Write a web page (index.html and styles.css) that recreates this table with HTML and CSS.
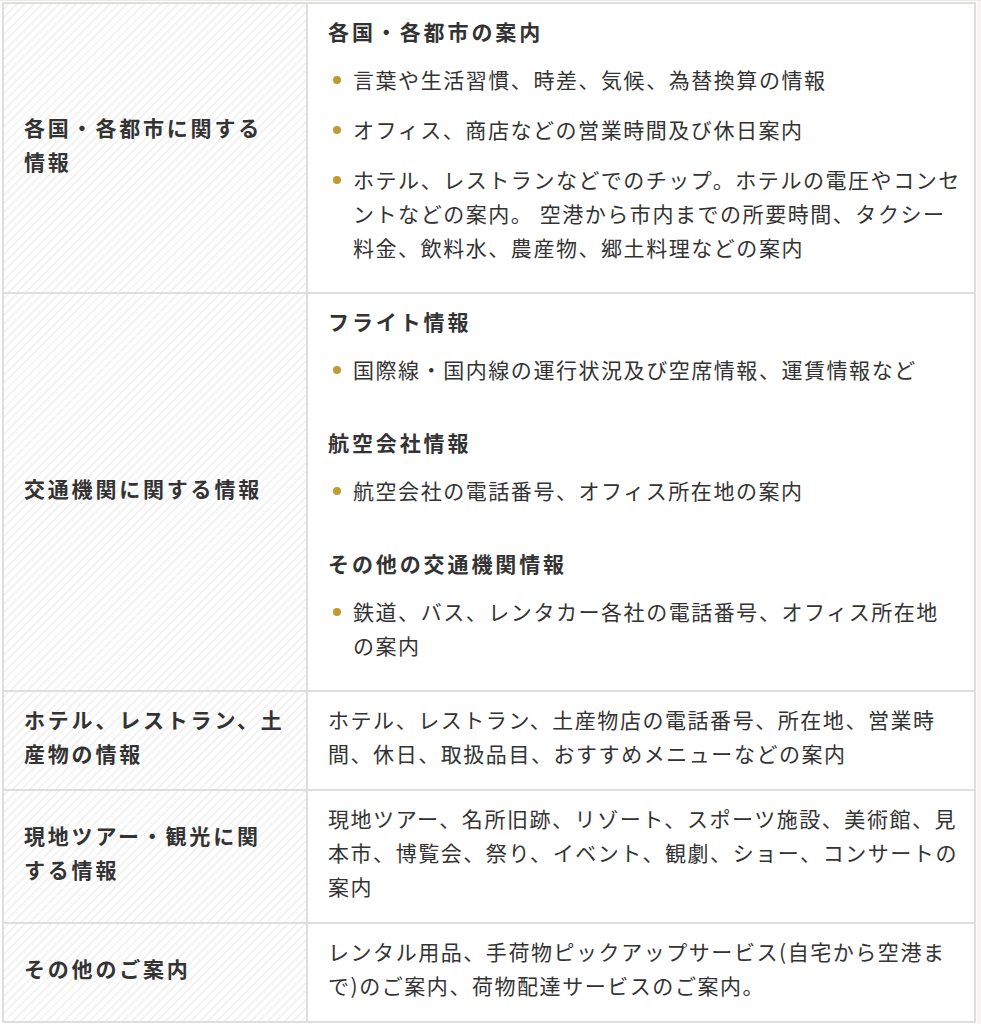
FILE: index.html
```html
<!DOCTYPE html>
<html lang="ja">
<head>
<meta charset="utf-8">
<title>案内</title>
<link rel="stylesheet" href="styles.css">
</head>
<body>
<div class="page">
  <div class="main">
    <table class="info">
      <tbody>
        <tr class="r1">
          <th class="label">各国・各都市に関する<br>情報</th>
          <td class="content">
            <h4 class="head">各国・各都市の案内</h4>
            <ul class="list">
              <li>言葉や生活習慣、時差、気候、為替換算の情報</li>
              <li>オフィス、商店などの営業時間及び休日案内</li>
              <li>ホテル、レストランなどでのチップ。ホテルの電圧やコンセ<br>ントなどの案内。 空港から市内までの所要時間、タクシー<br>料金、飲料水、農産物、郷土料理などの案内</li>
            </ul>
          </td>
        </tr>
        <tr>
          <th class="label">交通機関に関する情報</th>
          <td class="content">
            <h4 class="head">フライト情報</h4>
            <ul class="list">
              <li>国際線・国内線の運行状況及び空席情報、運賃情報など</li>
            </ul>
            <h4 class="head next">航空会社情報</h4>
            <ul class="list">
              <li>航空会社の電話番号、オフィス所在地の案内</li>
            </ul>
            <h4 class="head next">その他の交通機関情報</h4>
            <ul class="list">
              <li>鉄道、バス、レンタカー各社の電話番号、オフィス所在地<br>の案内</li>
            </ul>
          </td>
        </tr>
        <tr>
          <th class="label">ホテル、レストラン、土<br>産物の情報</th>
          <td class="content">ホテル、レストラン、土産物店の電話番号、所在地、営業時<br>間、休日、取扱品目、おすすめメニューなどの案内</td>
        </tr>
        <tr>
          <th class="label">現地ツアー・観光に関<br>する情報</th>
          <td class="content">現地ツアー、名所旧跡、リゾート、スポーツ施設、美術館、見<br>本市、博覧会、祭り、イベント、観劇、ショー、コンサートの<br>案内</td>
        </tr>
        <tr>
          <th class="label">その他のご案内</th>
          <td class="content">レンタル用品、手荷物ピックアップサービス(自宅から空港ま<br>で)のご案内、荷物配達サービスのご案内。</td>
        </tr>
      </tbody>
    </table>
  </div>
  <div class="strip"></div>
</div>
</body>
</html>
```

FILE: styles.css
```css
* { box-sizing: border-box; }

html, body {
  margin: 0;
  padding: 0;
  background: #ffffff;
}

body {
  font-family: "Noto Sans CJK JP", "Noto Sans", sans-serif;
  color: #333333;
  border-top: 1px solid #efe9e2;
}

.page {
  display: flex;
  align-items: stretch;
  min-height: 1023px;
}

.main {
  width: 977px;
  padding: 1px 0 0 2px;
}

.strip {
  flex: 1;
  background: #fdf1f1;
}

.info {
  width: 974px;
  border-collapse: separate;
  border-spacing: 0;
  border-top: 2px solid #dedede;
  border-left: 2px solid #dedede;
}

.info th,
.info td {
  border-right: 2px solid #dedede;
  border-bottom: 2px solid #dedede;
  font-size: 21px;
  line-height: 34px;
  white-space: nowrap;
}

.label {
  width: 304px;
  padding: 10px 10px 19px 20px;
  text-align: left;
  vertical-align: middle;
  font-weight: 700;
  letter-spacing: 2.8px;
  background-color: #fcfcfc;
  background-image: repeating-linear-gradient(135deg, #ffffff 0 2px, #f3f3f3 2px 4px, #ffffff 4px 6px);
}

.content {
  padding: 10px 10px 19px 20px;
  vertical-align: top;
  font-weight: 400;
  letter-spacing: 1.55px;
  background: #ffffff;
}

.head {
  margin: 0 0 14px;
  font-size: 21px;
  line-height: 34px;
  font-weight: 700;
  letter-spacing: 2.9px;
}

.head.next {
  margin-top: 39px;
}

.list {
  list-style: none;
  margin: 0 0 9px;
  padding: 0;
}

.list li {
  position: relative;
  padding-left: 25px;
  margin-bottom: 16px;
}

.list li:last-child {
  margin-bottom: 0;
}

.list li::before {
  content: "";
  position: absolute;
  left: 5px;
  top: 14px;
  width: 8px;
  height: 8px;
  border-radius: 50%;
  background: #bf9b32;
}
```
